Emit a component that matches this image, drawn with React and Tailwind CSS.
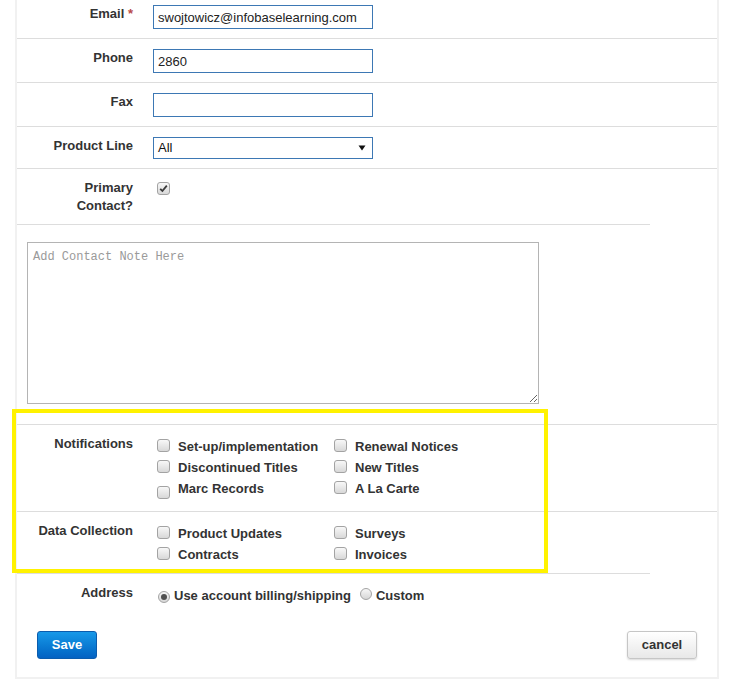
import React from "react";

const font = "font-['Liberation_Sans',Arial,sans-serif]";

function Box({ checked = false, className = "" }) {
  return (
    <span
      className={
        "inline-flex h-[13px] w-[13px] shrink-0 items-center justify-center rounded-[3px] border border-[#a3a3a3] bg-linear-to-b from-[#f8f8f8] to-[#d8d8d8] " +
        className
      }
    >
      {checked && (
        <svg width="9" height="9" viewBox="0 0 9 9">
          <path d="M1.2 4.8 L3.4 7 L7.8 1.6" fill="none" stroke="#3a3a3a" strokeWidth="1.8" />
        </svg>
      )}
    </span>
  );
}

function Radio({ on = false }) {
  return (
    <span className="inline-flex h-[12px] w-[12px] shrink-0 items-center justify-center rounded-full border border-[#a3a3a3] bg-linear-to-b from-[#f7f7f7] to-[#d6d6d6]">
      {on && <span className="h-[6px] w-[6px] rounded-full bg-[#505050]" />}
    </span>
  );
}

function Row({ label, children, className = "pt-[10px] pb-[9px]", border = "border-b border-[#dddddd]" }) {
  return (
    <div className={"flex " + border + " " + className}>
      <div className="w-[116px] shrink-0 text-right font-bold leading-[18px] text-[#333]">{label}</div>
      <div className="ml-[20px]">{children}</div>
    </div>
  );
}

function Field({ value = "" }) {
  return (
    <input
      readOnly
      value={value}
      className="block h-[24px] w-[220px] border border-[#3d78b4] bg-white px-[4px] text-[13px] text-[#222] outline-none"
    />
  );
}

function Option({ label, boxClass = "mt-[3px]" }) {
  return (
    <div className="flex h-[21px] items-start">
      <Box className={"ml-[4px] " + boxClass} />
      <span className="ml-[8px] font-bold leading-[21px] text-[#333]">{label}</span>
    </div>
  );
}

export default function App() {
  return (
    <div className={"min-h-[691px] bg-white text-[13px] text-[#333] " + font}>
      <div className="relative ml-[15px] w-[704px] border-x-2 border-b-2 border-[#f1f1f1] pb-[18px]">
        <Row
          className="pt-[5px] pb-[9px]"
          label={
            <>
              Email <span className="text-[#b94a48]">*</span>
            </>
          }
        >
          <Field value="swojtowicz@infobaselearning.com" />
        </Row>
        <Row label="Phone">
          <Field value="2860" />
        </Row>
        <Row label="Fax">
          <Field />
        </Row>
        <Row label="Product Line">
          <div className="flex h-[22px] w-[220px] items-center justify-between border border-[#3d78b4] bg-white pl-[4px] pr-[6px] text-[13px] text-[#111]">
            <span>All</span>
            <svg width="8" height="6" viewBox="0 0 8 6">
              <path d="M0.5 0.5 H7.5 L4 5.5 Z" fill="#111" />
            </svg>
          </div>
        </Row>
        <div className="w-[633px]">
          <Row
            label={
              <>
                Primary
                <br />
                Contact?
              </>
            }
          >
            <Box checked className="ml-[4px] mt-[2px]" />
          </Row>
        </div>

        <div className="pt-[17px] pb-[20px] pl-[10px]">
          <textarea
            placeholder="Add Contact Note Here"
            className="block h-[162px] w-[512px] border border-[#b4b4b4] px-[5px] pt-[7px] font-['Liberation_Mono',monospace] text-[12px] leading-[15px] text-[#333] placeholder:text-[#9a9a9a] outline-none"
          />
        </div>

        <Row label="Notifications" border="border-y border-[#dddddd]" className="pt-[10px] pb-[12px]">
          <div className="grid grid-cols-[177px_178px] pt-[1px]">
            <Option label="Set-up/implementation" />
            <Option label="Renewal Notices" />
            <Option label="Discontinued Titles" />
            <Option label="New Titles" />
            <Option label="Marc Records" boxClass="mt-[8px]" />
            <Option label="A La Carte" />
          </div>
        </Row>
        <Row label="Data Collection" border="" className="pt-[10px] pb-[8px]">
          <div className="grid grid-cols-[177px_178px] pt-[1px]">
            <Option label="Product Updates" />
            <Option label="Surveys" />
            <Option label="Contracts" />
            <Option label="Invoices" />
          </div>
        </Row>
        <div className="h-px w-[633px] bg-[#dddddd]" />

        <Row label="Address" border="" className="pt-[10px] pb-0">
          <div className="flex items-center pt-[3px] font-bold leading-[18px] text-[#333]">
            <span className="ml-[5px]">
              <Radio on />
            </span>
            <span className="ml-[4px]">Use account billing/shipping</span>
            <span className="ml-[9px]">
              <Radio />
            </span>
            <span className="ml-[4px]">Custom</span>
          </div>
        </Row>

        <div className="flex justify-between px-[20px] pt-[26px]">
          <button className="h-[28px] w-[60px] rounded-[3px] border border-[#0b5cad] bg-linear-to-b from-[#1899e8] to-[#0462c2] text-[13px] font-bold text-white">
            Save
          </button>
          <button className="h-[28px] w-[70px] rounded-[3px] border border-[#c6c6c6] bg-linear-to-b from-white to-[#e8e8e8] text-[13px] font-bold text-[#333] shadow-[0_1px_2px_rgba(0,0,0,0.15)]">
            cancel
          </button>
        </div>

        {/* highlight frame around the notification preferences */}
        <div className="pointer-events-none absolute left-[-5px] top-[409px] h-[164px] w-[536px] border-4 border-[#fff200]" />
      </div>
    </div>
  );
}
